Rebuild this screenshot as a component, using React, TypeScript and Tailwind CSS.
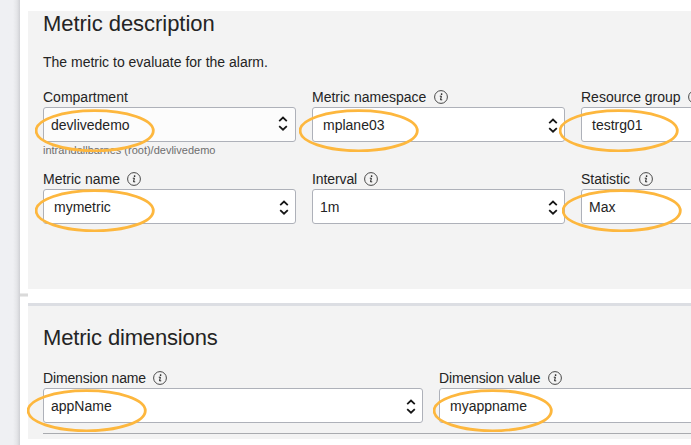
import type { ReactNode } from "react";

function InfoIcon() {
  return (
    <svg width="14" height="14" viewBox="0 0 14 14" className="shrink-0" fill="none">
      <circle cx="7" cy="7" r="6.4" stroke="#484848" strokeWidth="1" />
      <circle cx="7.6" cy="4.1" r="0.85" fill="#222" />
      <path d="M5.8 6.2H7.4L6.5 9.8H8.2" stroke="#222" strokeWidth="1" />
    </svg>
  );
}

function Sorter({ className }: { className: string }) {
  return (
    <svg width="10" height="15" viewBox="0 0 10 15" className={`shrink-0 ${className}`} fill="none" stroke="#161616" strokeWidth="1.8">
      <path d="M1.2 5.1L5 1.5L8.8 5.1M1.2 10.1L5 13.7L8.8 10.1" />
    </svg>
  );
}

function Highlight({ className }: { className: string }) {
  return (
    <svg width="120" height="43" viewBox="0 0 120 43" className={`absolute z-10 pointer-events-none ${className}`} fill="none">
      <ellipse cx="59.7" cy="21.7" rx="58.6" ry="20.1" stroke="#fdb73e" strokeWidth="2.8" />
    </svg>
  );
}

type FieldProps = {
  label: string;
  info?: boolean;
  value: string;
  width: string;
  box?: string;
  text?: string;
  sorter?: string;
  mark?: string;
  tracking?: string;
  gap?: string;
  children?: ReactNode;
};

function Field({ label, info, value, width, box = "bg-white", text = "pl-[7px]", sorter, mark, tracking = "", gap = "gap-[7px]", children }: FieldProps) {
  return (
    <div className={`shrink-0 ${width}`}>
      <div className={`flex h-[19px] items-start whitespace-nowrap text-sm leading-[18px] ${gap}`}>
        <span className={tracking}>{label}</span>
        {info && <span className="pt-[2px]"><InfoIcon /></span>}
      </div>
      <div className={`relative flex h-[35px] items-start justify-between rounded-[3px] border border-[#aeb1b9] text-sm leading-[18px] ${box}`}>
        <span className={`pt-[8px] ${text}`}>{value}</span>
        {sorter && <Sorter className={sorter} />}
        {mark && <Highlight className={mark} />}
      </div>
      {children}
    </div>
  );
}

export default function App() {
  return (
    <div className="flex h-[445px] w-[691px] overflow-hidden bg-white text-[#242424]" style={{ fontFamily: '"Liberation Sans", Arial, sans-serif' }}>
      <aside className="h-full w-5 shrink-0 bg-linear-to-r from-[#eff0f3] from-65% via-[#e4e5e8] via-85% to-[#cfd0d4]" />
      <div className="flex w-2 shrink-0 flex-col pt-[293px]">
        <div className="h-1 border-y border-[#ebebeb] bg-[#dadada]" />
      </div>
      <main className="w-[663px] shrink-0 pt-[11px]">
        <section className="h-[278px] bg-[#f3f3f3] pl-[15px]">
          <h2 className="text-[22px] leading-[26px] tracking-[-0.04px]">Metric description</h2>
          <p className="pt-[16px] text-sm leading-[18px]">The metric to evaluate for the alarm.</p>
          <div className="flex gap-4 pt-[17px]">
            <Field label="Compartment" value="devlivedemo" width="w-[253px]" box="bg-[#fcfcfc]" sorter="mt-[8px] mr-[7px]" mark="-left-[9px] top-[1px]">
              <div className="h-[14px] pt-[2px] text-[11px] leading-[13px] text-[#6e6e6e]">intrandallbarnes (root)/devlivedemo</div>
            </Field>
            <Field label="Metric namespace" info value="mplane03" width="w-[253px]" text="pl-[10px]" sorter="mt-[10px] mr-[6px]" mark="-left-[14px] top-[1px]" gap="gap-2" />
            <Field label="Resource group" info value="testrg01" width="w-[253px]" text="pl-[10px]" mark="-left-[23px] top-[1px]" />
          </div>
          <div className="flex gap-4 pt-[14px]">
            <Field label="Metric name" info value="mymetric" width="w-[253px]" text="pl-[10px]" sorter="mt-[10px] mr-[6px]" mark="-left-[9px] -top-px" />
            <Field label="Interval" info value="1m" width="w-[253px]" sorter="mt-[10px] mr-[6px]" tracking="tracking-[-0.1px]" />
            <Field label="Statistic" info value="Max" width="w-[253px]" mark="-left-[20px] -top-px" gap="gap-[9px]" />
          </div>
        </section>
        <section className="mt-[14px] h-[136px] border-t-[3px] border-[#dcdee3] bg-[#f3f3f3] pl-[15px]">
          <h2 className="pt-[19px] text-[22px] leading-[26px] tracking-[-0.16px]">Metric dimensions</h2>
          <div className="flex gap-4 pt-[18px]">
            <Field label="Dimension name" info value="appName" width="w-[380px]" sorter="mt-[10px] mr-[6px]" mark="-left-[17px] top-0" tracking="tracking-[-0.15px]" />
            <Field label="Dimension value" info value="myappname" width="w-[380px]" text="pl-[10px]" mark="-left-[7px] top-0" tracking="tracking-[-0.14px]" gap="gap-2" />
          </div>
          <div className="mt-[10px] h-px bg-[#a9abaf]" />
        </section>
      </main>
    </div>
  );
}
